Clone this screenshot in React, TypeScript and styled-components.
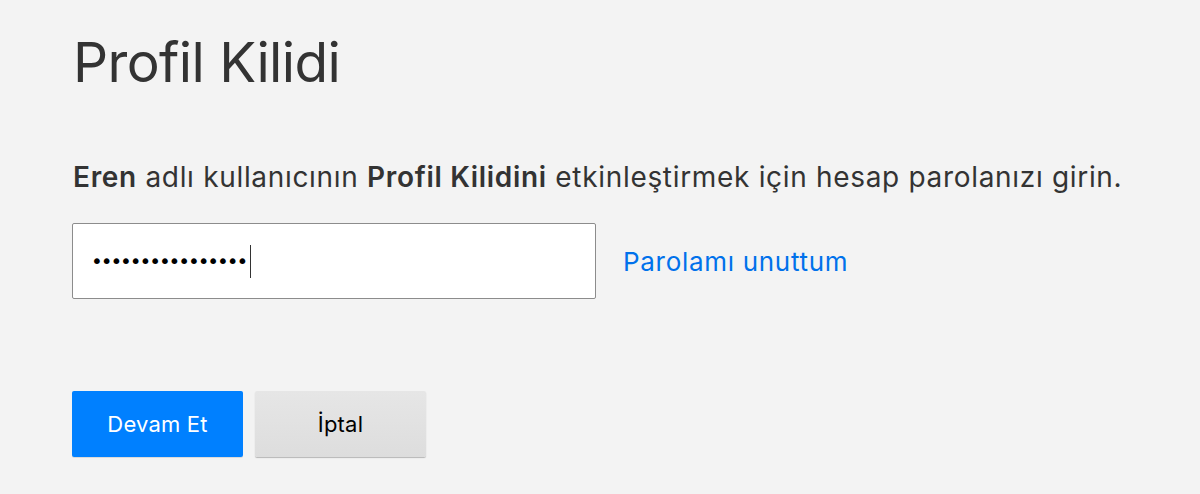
import React, { useState } from 'react'
import styled, { createGlobalStyle } from 'styled-components'

const GlobalStyle = createGlobalStyle`
	html, body {
		margin: 0;
		background: #f3f3f3;
		font-family: Inter, "Noto Sans", "Liberation Sans", sans-serif;
		color: #333;
	}
`

const Page = styled.div`
	padding: 26px 0 0 73px;
	min-height: 494px;
	box-sizing: border-box;
`

const Title = styled.h1`
	margin: 0;
	font-size: 55px;
	font-weight: 400;
	line-height: 72px;
	color: #333;
	letter-spacing: -0.6px;
`

const Lead = styled.p`
	margin: 62px 0 0;
	font-size: 28px;
	line-height: 34px;
	letter-spacing: 0.68px;
	color: #333;
	white-space: nowrap;

	b {
		font-weight: 600;
	}
`

const Row = styled.div`
	display: flex;
	align-items: center;
	gap: 27px;
	margin-top: 29px;
	margin-left: -1px;
`

const Field = styled.div`
	position: relative;
	display: flex;
`

const PasswordInput = styled.input`
	width: 524px;
	height: 76px;
	box-sizing: border-box;
	border: 1px solid #8c8c8c;
	border-radius: 2px;
	background: #fff;
	padding: 0 18px;
	font-size: 20px;
	font-family: "DejaVu Sans", sans-serif;
	color: #000;
	letter-spacing: -2.1px;
	outline: none;
	caret-color: transparent;
`

const Caret = styled.span`
	position: absolute;
	left: 178px;
	top: 22px;
	width: 1px;
	height: 33px;
	background: #333;
	pointer-events: none;
`

const ForgotLink = styled.a`
	font-size: 26px;
	letter-spacing: 0.7px;
	color: #0071eb;
	text-decoration: none;
	cursor: pointer;
`

const Actions = styled.div`
	display: flex;
	gap: 12px;
	margin-top: 92px;
	margin-left: -1px;
`

const Button = styled.button<{ $primary?: boolean }>`
	width: 171px;
	height: 66px;
	border: none;
	border-radius: 2px;
	font-family: inherit;
	font-size: 22px;
	letter-spacing: 0.2px;
	cursor: pointer;
	color: ${(p) => (p.$primary ? '#fff' : '#000')};
	background: ${(p) =>
		p.$primary ? '#0080ff' : 'linear-gradient(180deg, #e6e6e6 0%, #dddddd 100%)'};
	box-shadow: ${(p) =>
		p.$primary ? '0 1px 0 rgba(0,0,0,0.1)' : '0 1px 1px rgba(0,0,0,0.25)'};
`

export default function App() {
	const [pw, setPw] = useState('abcdefghijklmnop')
	return (
		<>
			<GlobalStyle />
			<Page>
				<Title>Profil Kilidi</Title>
				<Lead>
					<b>Eren</b> adlı kullanıcının <b>Profil Kilidini</b> etkinleştirmek için hesap
					parolanızı girin.
				</Lead>
				<Row>
					<Field>
						<PasswordInput
							type="password"
							value={pw}
							onChange={(e) => setPw(e.target.value)}
						/>
						<Caret />
					</Field>
					<ForgotLink>Parolamı unuttum</ForgotLink>
				</Row>
				<Actions>
					<Button $primary>Devam Et</Button>
					<Button>İptal</Button>
				</Actions>
			</Page>
		</>
	)
}
